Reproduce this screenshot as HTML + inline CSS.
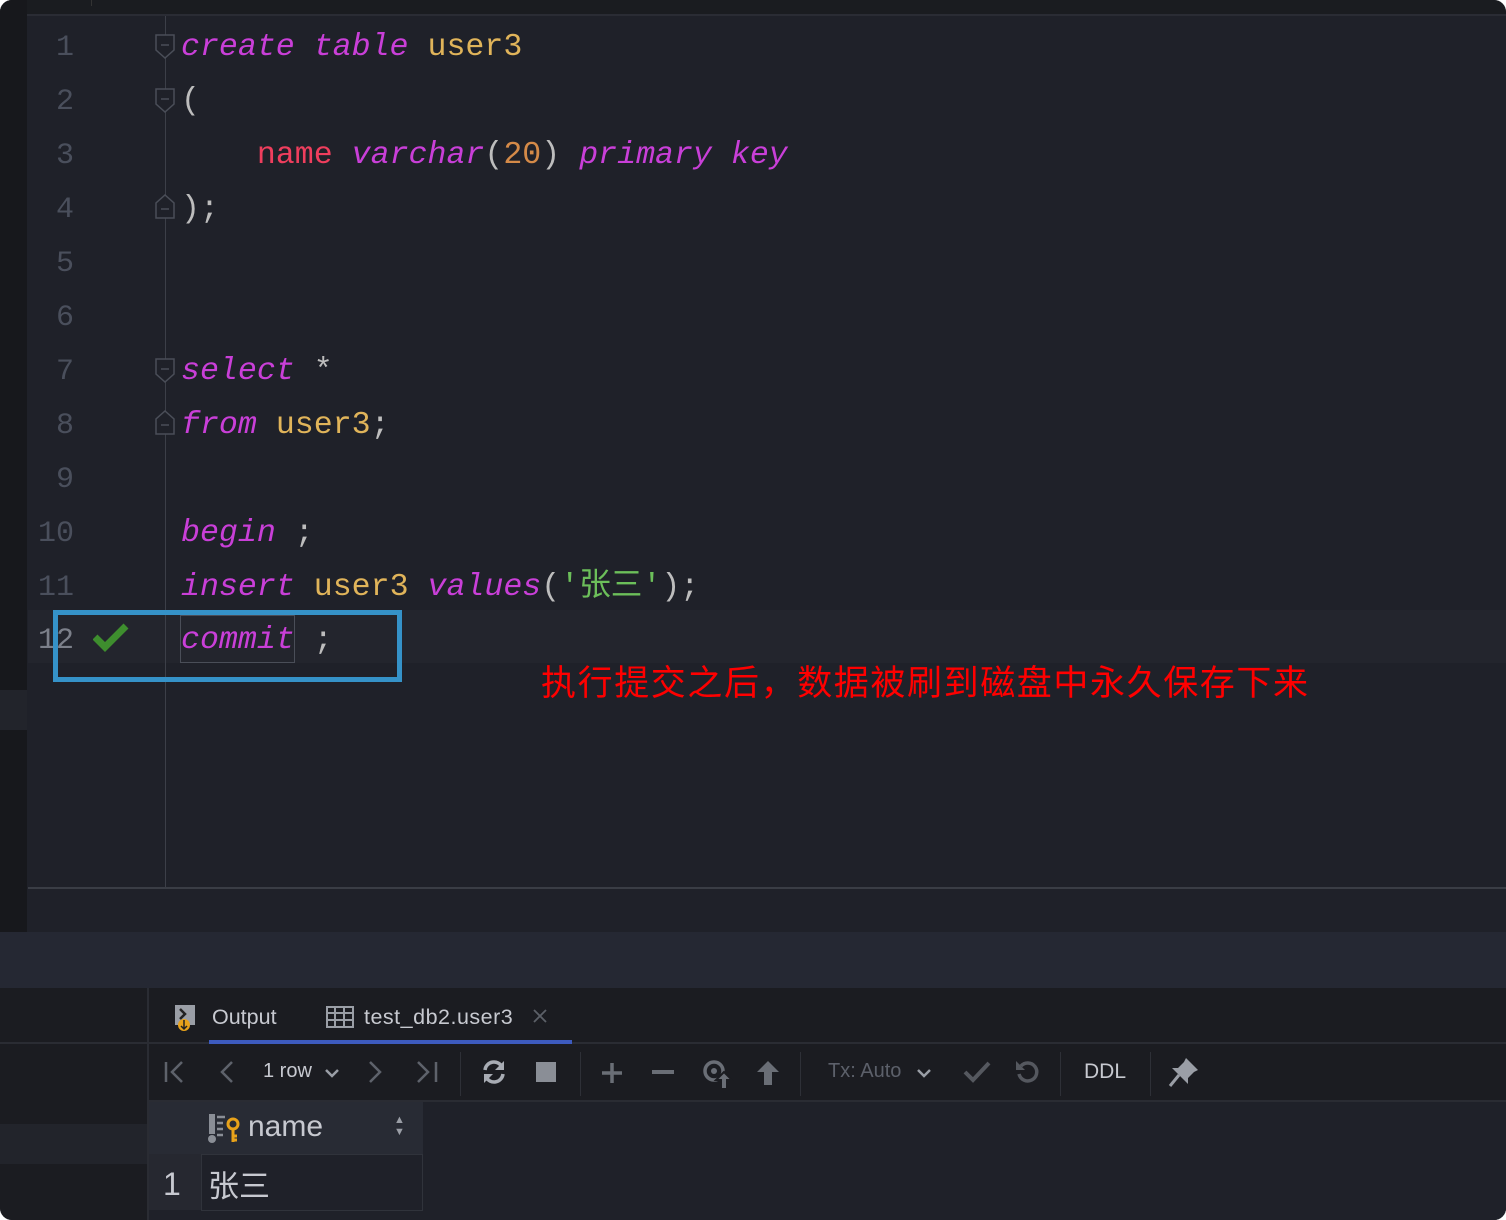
<!DOCTYPE html>
<html><head><meta charset="utf-8"><style>
*{margin:0;padding:0;box-sizing:border-box}
body{width:1506px;height:1220px;background:#fff;overflow:hidden;font-family:"Liberation Sans","Noto Sans CJK SC",sans-serif}
#win{position:absolute;left:0;top:0;width:1506px;height:1220px;background:#1f2129;border-radius:12px;overflow:hidden}
.abs{position:absolute}
.code{font-family:"Liberation Mono","Noto Sans CJK SC",monospace;font-size:31.6px;white-space:pre;line-height:54px}
.ln{position:absolute;left:28px;width:46px;text-align:right;color:#4a4f5c;font-family:"Liberation Mono",monospace;font-size:30px;line-height:54px}
.kw{color:#c93fd8;font-style:italic}
.id{color:#e0b45a}
.nm{color:#ef3e5d}
.num{color:#d48a48}
.p{color:#bdbdbd}
.str{color:#6cbf5a}
.fold{position:absolute;left:155px;width:20px;height:26px}
.tb{color:#6a6e78;font-size:22px}
</style></head><body>
<div id="win">
<div class="abs" style="left:0;top:0;width:1506px;height:14px;background:#1a1c20"></div>
<div class="abs" style="left:0;top:14px;width:1506px;height:2px;background:#2a2c34"></div>
<div class="abs" style="left:91px;top:0;width:1px;height:6px;background:#333"></div>
<div class="abs" style="left:0;top:0;width:27px;height:932px;background:#17181c"></div>
<div class="abs" style="left:0;top:690px;width:27px;height:40px;background:#22242b"></div>
<div class="abs" style="left:28px;top:610px;width:1478px;height:53px;background:#23252d"></div>
<div class="abs" style="left:165px;top:16px;width:1px;height:872px;background:#3c3f48"></div>
<div class="abs" style="left:28px;top:887px;width:1478px;height:2px;background:#3a3d45"></div>
<div class="ln" style="top:21px">1</div><div class="ln" style="top:75px">2</div><div class="ln" style="top:129px">3</div><div class="ln" style="top:183px">4</div><div class="ln" style="top:237px">5</div><div class="ln" style="top:291px">6</div><div class="ln" style="top:345px">7</div><div class="ln" style="top:399px">8</div><div class="ln" style="top:453px">9</div><div class="ln" style="top:507px">10</div><div class="ln" style="top:561px">11</div><div class="ln" style="top:614px;color:#7c808a">12</div>
<svg class="fold" style="top:34px" viewBox="0 0 20 26"><path d="M1 1H19V16L10 24L1 16Z" fill="#1f2129" stroke="#4a4e58" stroke-width="1.5"/><path d="M6 11H14" stroke="#4a4e58" stroke-width="1.5"/></svg>
<svg class="fold" style="top:88px" viewBox="0 0 20 26"><path d="M1 1H19V16L10 24L1 16Z" fill="#1f2129" stroke="#4a4e58" stroke-width="1.5"/><path d="M6 11H14" stroke="#4a4e58" stroke-width="1.5"/></svg>
<svg class="fold" style="top:193px" viewBox="0 0 20 26"><path d="M1 25H19V10L10 2L1 10Z" fill="#1f2129" stroke="#4a4e58" stroke-width="1.5"/><path d="M6 16H14" stroke="#4a4e58" stroke-width="1.5"/></svg>
<svg class="fold" style="top:358px" viewBox="0 0 20 26"><path d="M1 1H19V16L10 24L1 16Z" fill="#1f2129" stroke="#4a4e58" stroke-width="1.5"/><path d="M6 11H14" stroke="#4a4e58" stroke-width="1.5"/></svg>
<svg class="fold" style="top:409px" viewBox="0 0 20 26"><path d="M1 25H19V10L10 2L1 10Z" fill="#1f2129" stroke="#4a4e58" stroke-width="1.5"/><path d="M6 16H14" stroke="#4a4e58" stroke-width="1.5"/></svg>
<div class="abs code" style="left:181px;top:21px"><span class="kw">create table</span> <span class="id">user3</span></div>
<div class="abs code p" style="left:181px;top:75px">(</div>
<div class="abs code" style="left:181px;top:129px">    <span class="nm">name</span> <span class="kw">varchar</span><span class="p">(</span><span class="num">20</span><span class="p">)</span> <span class="kw">primary key</span></div>
<div class="abs code p" style="left:181px;top:183px">);</div>
<div class="abs code" style="left:181px;top:345px"><span class="kw">select</span> <span class="p">*</span></div>
<div class="abs code" style="left:181px;top:399px"><span class="kw">from</span> <span class="id">user3</span><span class="p">;</span></div>
<div class="abs code" style="left:181px;top:507px"><span class="kw">begin</span> <span class="p">;</span></div>
<div class="abs code" style="left:181px;top:561px"><span class="kw">insert</span> <span class="id">user3</span> <span class="kw">values</span><span class="p">(</span><span class="str">'张三'</span><span class="p">);</span></div>
<div class="abs code" style="left:181px;top:614px"><span class="kw">commit</span> <span class="p">;</span></div>
<div class="abs" style="left:180px;top:615px;width:115px;height:48px;border:1.5px solid #4a4e58"></div>
<svg class="abs" style="left:93px;top:622px" width="36" height="30" viewBox="0 0 36 30"><path d="M2 15L12 25L33 4" fill="none" stroke="#3e8e2e" stroke-width="7"/></svg>
<div class="abs" style="left:53px;top:610px;width:349px;height:72px;border:5px solid #3592c8"></div>
<div class="abs" style="left:541px;top:656px;color:#f00;font-size:35px;letter-spacing:1.6px;line-height:50px;white-space:nowrap;font-family:'Noto Sans CJK SC',sans-serif">执行提交之后，数据被刷到磁盘中永久保存下来</div>
<div class="abs" style="left:0;top:932px;width:1506px;height:56px;background:#252833"></div>
<div class="abs" style="left:0;top:988px;width:1506px;height:232px;background:#1b1c21"></div>
<div class="abs" style="left:0;top:1042px;width:1506px;height:2px;background:#2a2c33"></div>
<div class="abs" style="left:147px;top:988px;width:2px;height:232px;background:#2a2c33"></div>
<div class="abs" style="left:0;top:1124px;width:147px;height:40px;background:#22242b"></div>
<svg class="abs" style="left:175px;top:1005px" width="24" height="28" viewBox="0 0 24 28"><rect x="0" y="0" width="20" height="20" fill="#9a9ea6"/><path d="M5 4L10 9L5 14" stroke="#222" stroke-width="2.5" fill="none"/><circle cx="9" cy="20" r="6" fill="#e8a21a"/><path d="M9 15V24M6 21L9 24L12 21" stroke="#222" stroke-width="1.5" fill="none"/></svg>
<div class="abs" style="left:212px;top:1003px;color:#c7c9d0;font-size:21.5px;line-height:28px">Output</div>
<svg class="abs" style="left:326px;top:1006px" width="28" height="22" viewBox="0 0 28 22"><rect x="1" y="1" width="26" height="20" fill="none" stroke="#9a9ea6" stroke-width="2"/><path d="M1 7H27M1 14H27M9 1V21M18 1V21" stroke="#9a9ea6" stroke-width="2"/></svg>
<div class="abs" style="left:364px;top:1003px;color:#c7c9d0;font-size:21.5px;line-height:28px;letter-spacing:0.5px">test_db2.user3</div>
<svg class="abs" style="left:532px;top:1008px" width="16" height="16" viewBox="0 0 16 16"><path d="M2 2L14 14M14 2L2 14" stroke="#5c6068" stroke-width="1.8"/></svg>
<div class="abs" style="left:209px;top:1040px;width:363px;height:4px;background:#3d5bbf"></div>
<svg class="abs" style="left:160px;top:1060px" width="290" height="26" viewBox="0 0 290 26"><g fill="none" stroke="#5e626b" stroke-width="2.5"><path d="M6 2V22M22 2L12 12L22 22"/><path d="M72 2L62 12L72 22"/><path d="M210 2L220 12L210 22"/><path d="M258 2L268 12L258 22M276 2V22"/></g></svg>
<div class="abs" style="left:263px;top:1060px;color:#c7c9d0;font-size:20px">1 row</div>
<svg class="abs" style="left:324px;top:1067px" width="16" height="12" viewBox="0 0 16 12"><path d="M2 3L8 9L14 3" fill="none" stroke="#9a9ea6" stroke-width="2.5"/></svg>
<div class="abs" style="left:460px;top:1052px;width:1px;height:44px;background:#2e3037"></div>
<svg class="abs" style="left:480px;top:1058px" width="28" height="28" viewBox="0 0 28 28"><g fill="none" stroke="#a8acb4" stroke-width="3.5"><path d="M5 12A9 9 0 0 1 22 9"/><path d="M23 16A9 9 0 0 1 6 19"/></g><path d="M24 3V12H15Z" fill="#a8acb4"/><path d="M4 25V16H13Z" fill="#a8acb4"/></svg>
<div class="abs" style="left:536px;top:1062px;width:20px;height:20px;background:#8a8e96"></div>
<div class="abs" style="left:580px;top:1052px;width:1px;height:44px;background:#2e3037"></div>
<svg class="abs" style="left:600px;top:1061px" width="24" height="24" viewBox="0 0 24 24"><path d="M12 2V22M2 12H22" stroke="#6a6e76" stroke-width="3.5"/></svg>
<div class="abs" style="left:652px;top:1070px;width:22px;height:3.5px;background:#6a6e76"></div>
<svg class="abs" style="left:702px;top:1058px" width="32" height="32" viewBox="0 0 32 32"><circle cx="12" cy="13" r="9" fill="none" stroke="#6a6e76" stroke-width="3.5"/><circle cx="12" cy="13" r="3" fill="#6a6e76"/><path d="M22 14L14 22H19V31H25V22H30Z" fill="#6a6e76" stroke="#1b1c21" stroke-width="2"/></svg>
<svg class="abs" style="left:756px;top:1060px" width="24" height="26" viewBox="0 0 24 26"><path d="M12 1L23 12H16V25H8V12H1Z" fill="#6a6e76"/></svg>
<div class="abs" style="left:800px;top:1052px;width:1px;height:44px;background:#2e3037"></div>
<div class="abs" style="left:828px;top:1060px;color:#5c606a;font-size:20px">Tx: Auto</div>
<svg class="abs" style="left:916px;top:1067px" width="16" height="12" viewBox="0 0 16 12"><path d="M2 3L8 9L14 3" fill="none" stroke="#9a9ea6" stroke-width="2.5"/></svg>
<svg class="abs" style="left:963px;top:1060px" width="28" height="24" viewBox="0 0 28 24"><path d="M2 12L10 20L26 3" fill="none" stroke="#55585f" stroke-width="4"/></svg>
<svg class="abs" style="left:1014px;top:1058px" width="28" height="28" viewBox="0 0 28 28"><path d="M7 8A9 9 0 1 1 5 16" fill="none" stroke="#55585f" stroke-width="3.5"/><path d="M2 3V12H11Z" fill="#55585f"/></svg>
<div class="abs" style="left:1060px;top:1052px;width:1px;height:44px;background:#2e3037"></div>
<div class="abs" style="left:1084px;top:1060px;color:#c7c9d0;font-size:21px">DDL</div>
<div class="abs" style="left:1150px;top:1052px;width:1px;height:44px;background:#2e3037"></div>
<svg class="abs" style="left:1168px;top:1056px" width="32" height="32" viewBox="0 0 32 32"><path d="M18 2L30 14L26 16L20 22L20 28L4 12L10 12L16 6Z" fill="#9a9ea6"/><path d="M11 19L2 30" stroke="#9a9ea6" stroke-width="3"/></svg>
<div class="abs" style="left:147px;top:1100px;width:1359px;height:2px;background:#2a2c33"></div>
<div class="abs" style="left:149px;top:1102px;width:1357px;height:118px;background:#1f2129"></div>
<div class="abs" style="left:149px;top:1102px;width:274px;height:52px;background:#282b34"></div>
<div class="abs" style="left:149px;top:1154px;width:52px;height:56px;background:#262830"></div>
<div class="abs" style="left:201px;top:1154px;width:222px;height:57px;border:1px solid #30333b"></div>
<svg class="abs" style="left:207px;top:1114px" width="36" height="30" viewBox="0 0 36 30"><rect x="2" y="0" width="6" height="20" fill="#8a8e96"/><circle cx="5" cy="25" r="4" fill="#8a8e96"/><path d="M10 3H18M10 9H16M10 15H16M10 21H16" stroke="#8a8e96" stroke-width="2.5"/><circle cx="26" cy="10" r="5" fill="none" stroke="#e8a21a" stroke-width="3"/><path d="M26 15V28M26 22H30M26 26H30" stroke="#e8a21a" stroke-width="3"/></svg>
<div class="abs" style="left:248px;top:1108px;color:#c7c9d0;font-size:30px;line-height:38px">name</div>
<div class="abs" style="left:394px;top:1114px;color:#9a9ea6;font-size:11px;line-height:12px">▲<br>▼</div>
<div class="abs" style="left:163px;top:1164px;color:#c7c9d0;font-size:32px;line-height:40px">1</div>
<div class="abs" style="left:208px;top:1164px;color:#c7c9d0;font-size:31px;line-height:40px;font-family:'Noto Sans CJK SC',sans-serif">张三</div>
</div>
</body></html>
